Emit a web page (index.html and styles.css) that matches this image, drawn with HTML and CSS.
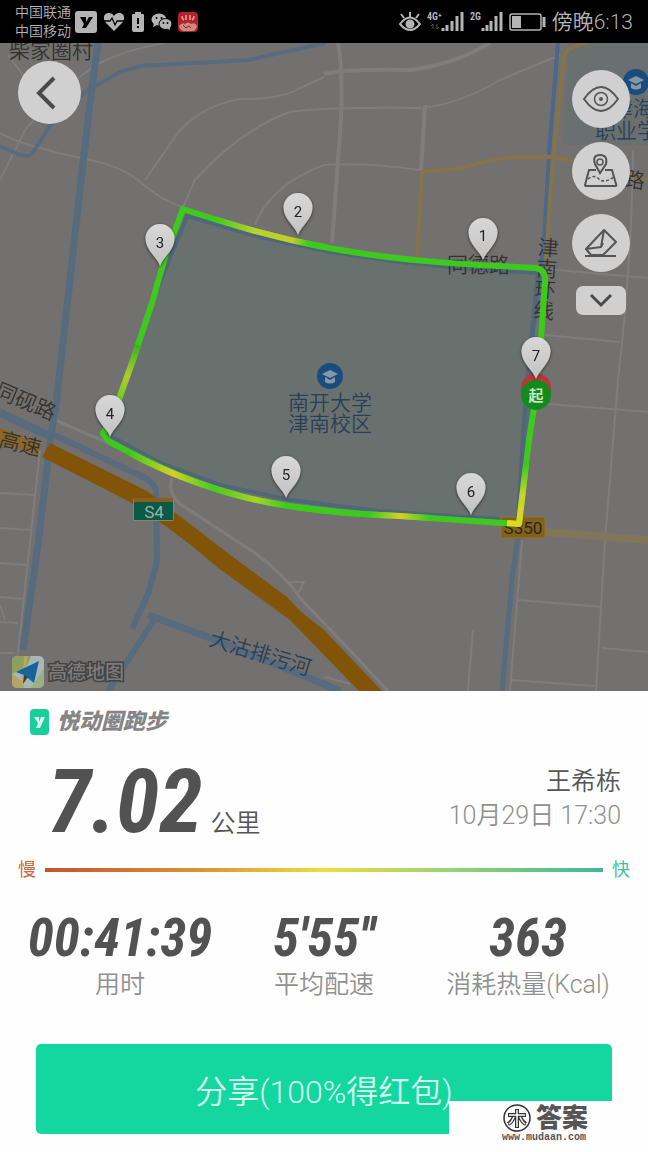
FILE: index.html
```html
<!DOCTYPE html>
<html lang="zh-CN">
<head>
<meta charset="utf-8">
<meta name="viewport" content="width=device-width, initial-scale=1">
<title>悦动圈跑步</title>
<link rel="stylesheet" href="styles.css">
</head>
<body>
<header class="status">
  <div class="carriers"><span>中国联通</span><span>中国移动</span></div>
  <div class="status-icons">
    <svg width="22" height="22" viewBox="0 0 22 22"><rect width="22" height="22" rx="3" fill="#b4b4b4"/><path d="M5 6H11V11L14 6H18L11 17H7L9 13z" fill="#000"/></svg>
    <svg width="22" height="20" viewBox="0 0 22 20"><path d="M11 19L3 11C-1 6 1 1 6 1c2 0 4 1 5 3 1-2 3-3 5-3 5 0 7 5 3 10z" fill="#b4b4b4"/><path d="M1 9h6l2-3 3 7 2-4h7" fill="none" stroke="#000" stroke-width="1.3"/></svg>
    <svg width="14" height="20" viewBox="0 0 14 20"><path d="M4 0h6v2h2q1 0 1 1v15q0 2-2 2H3q-2 0-2-2V3q0-1 1-1h2z" fill="#b4b4b4"/><path d="M7 6v6M7 14v2" stroke="#000" stroke-width="2"/></svg>
    <svg width="21" height="18" viewBox="0 0 21 18"><ellipse cx="8" cy="6.500" rx="7.500" ry="6" fill="#b4b4b4"/><path d="M3 10l-1 4 4-2z" fill="#b4b4b4"/><ellipse cx="14.500" cy="11" rx="6.500" ry="5.500" fill="#b4b4b4" stroke="#000"/><path d="M16 15l3 2v-4z" fill="#b4b4b4"/><g fill="#000"><circle cx="5.500" cy="5" r="1"/><circle cx="10.500" cy="5" r="1"/><circle cx="12.500" cy="10" r=".9"/><circle cx="16.500" cy="10" r=".9"/></g></svg>
    <svg width="20" height="20" viewBox="0 0 20 20"><rect width="20" height="20" rx="4" fill="#b71f2a"/><path d="M4 4q0 3 2 4M8 3v5M12 3v5M16 4q0 3-2 4" stroke="#e3a59a" stroke-width="1.500" fill="none"/><path d="M1 14q3-4 6-2 3-3 6 0 4-2 6 2-1 5-5 5H6q-4 0-5-5z" fill="#c98b82"/><path d="M5 13l3 3 3-2 2 2" stroke="#7d2a22" fill="none"/></svg>
  </div>
  <div class="status-right">
    <svg width="22" height="20" viewBox="0 0 22 20" fill="none" stroke="#b4b4b4" stroke-width="2"><path d="M1 12q10-13 20 0-10 12-20 0z"/><circle cx="11" cy="12" r="3.500" fill="#b4b4b4"/><path d="M11 5V0M5 6L2 2M17 6l3-4"/></svg>
    <svg width="37" height="21" viewBox="0 0 37 21"><text class="net" x="0" y="9">4G⁺</text><path d="M6 13v5M4 15l2-2M10 13v5l2-2" stroke="#555" fill="none"/><path d="M16 20v-3M20 20v-6M25 20V10M30 20V5M35 20V1" stroke="#b4b4b4" stroke-width="3"/></svg>
    <svg width="33" height="21" viewBox="0 0 33 21"><text class="net" x="0" y="9">2G</text><path d="M13 20v-3M17 20v-6M21 20V10M26 20V5M31 20V1" stroke="#b4b4b4" stroke-width="3"/></svg>
    <svg width="37" height="18" viewBox="0 0 37 18"><rect x="1" y="1" width="31" height="16" rx="2" fill="none" stroke="#b4b4b4" stroke-width="1.500"/><rect x="3" y="3" width="9" height="12" fill="#b4b4b4"/><path d="M35 4v10" stroke="#b4b4b4" stroke-width="3"/></svg>
    <time class="clock">傍晚6:13</time>
  </div>
</header>

<main>
<section class="map" aria-label="跑步路线">
<svg class="map-canvas" viewBox="0 43 648 648">
  <defs>
    <linearGradient id="pinFill" x1="0" y1="0" x2="0" y2="1"><stop offset="0" stop-color="#d8d8d8"/><stop offset="1" stop-color="#c2c2c2"/></linearGradient>
    <linearGradient id="topPace" gradientUnits="userSpaceOnUse" x1="215" y1="0" x2="325" y2="0"><stop offset="0" stop-color="#3dca1d"/><stop offset=".35" stop-color="#bad02f"/><stop offset=".7" stop-color="#c9ca2e"/><stop offset=".85" stop-color="#3dca1d"/></linearGradient>
    <linearGradient id="leftPace" gradientUnits="userSpaceOnUse" x1="0" y1="345" x2="0" y2="408"><stop offset="0" stop-color="#36b41f"/><stop offset=".5" stop-color="#b6c82e"/><stop offset="1" stop-color="#4fd01e"/></linearGradient>
    <linearGradient id="bottomPace" gradientUnits="userSpaceOnUse" x1="130" y1="0" x2="430" y2="0"><stop offset="0" stop-color="#3dca1d"/><stop offset=".14" stop-color="#d6cf27"/><stop offset=".28" stop-color="#48ca1f"/><stop offset=".42" stop-color="#a9d22a"/><stop offset=".52" stop-color="#3dca1d"/><stop offset=".8" stop-color="#3dca1d"/><stop offset=".9" stop-color="#d6cf27"/><stop offset="1" stop-color="#3dca1d"/></linearGradient>
    <linearGradient id="rightPace" gradientUnits="userSpaceOnUse" x1="0" y1="465" x2="0" y2="524"><stop offset="0" stop-color="#3dca1d"/><stop offset=".5" stop-color="#c6d428"/><stop offset="1" stop-color="#e0d820"/></linearGradient>
    <filter id="pinShadow" x="-50%" y="-50%" width="200%" height="200%"><feDropShadow dx="0" dy="1" stdDeviation="1.500" flood-color="#000" flood-opacity=".65"/></filter>
    <path id="pin" d="M0 0C-3-9-14.500-16-14.500-27.500a14.500 14.500 0 0 1 29 0C14.500-16 3-9 0 0z"/>
    <g id="school"><circle r="13" fill="#1b4c80"/><path d="M-8-2L0-6 8-2 0 2zM-5 1v5q5 3 10 0V1L0 4z" fill="#8798a5"/></g>
  </defs>

  <rect y="43" width="648" height="648" fill="#72716f"/>
  <path d="M568 43H648V145H563z" fill="#69706f"/>

  <g fill="none" stroke="#7f7e7d" stroke-width="2">
    <path d="M8 55L23 75M0 133Q20 145 90 160Q125 167 145 186Q165 202 183 207L195 180Q240 130 290 112Q325 107 420 108Q455 106 500 80L560 55"/>
    <path d="M0 180L25 130Q70 80 100 63Q125 50 165 43M145 180L180 130Q205 105 240 99Q280 100 300 88L324 77M255 225Q270 185 324 165Q365 162 420 170M633 150Q632 260 618 380L605 540 596 691"/>
    <path stroke-width="4" d="M324 74Q345 69 410 70Q455 64 490 43M338 43Q343 70 341 120L332 243M425 105L421 170"/>
    <path d="M545 269L648 278M545 335L620 342M548 404L648 412M518 600L602 607M602 648L648 652M512 680L594 686M473 630L468 691M522 540L510 691"/>
    <path d="M40 450L15 680M0 493L35 495M0 528L31 530M0 563L26 565M0 597L23 599M0 622L18 623M0 653L15 653M0 605L5 620"/>
    <path stroke-width="3" d="M55 420L120 448L145 463M172 478Q167 492 180 504L255 553Q285 575 300 598L345 645L388 691"/>
    <path d="M286 582L304 582 298 593M325 677L350 684"/>
  </g>

  <g fill="none" stroke="#566b7e" stroke-linejoin="round">
    <path stroke-width="7" d="M98 43L90 103 80 190 56 405 51 435 38 545 23 650"/>
    <path stroke-width="4" d="M325 43L248 60 140 66 120 72 85 92 50 126 34 151Q30 158 20 155L0 146"/>
    <path stroke-width="8" d="M0 413L50 436"/>
    <path stroke-width="6" d="M50 433L145 478Q156 484 156 492L157 562 148 594 132 629M108 691L154 620"/>
    <path stroke-width="7" d="M148 615L205 636 324 684 340 691"/>
    <path stroke-width="5" d="M532 330L528 420 519 530 512 580 502 691"/>
    <path stroke="#4d678a" stroke-width="4" d="M558 43L550 140 544 240 532 340"/>
  </g>
  <path d="M187 216L260 237 330 252 400 262 470 269 538 273 530 350 524 420 518 520 450 516 380 511 290 500 220 485 160 463 107 434 124 387 153 300z" fill="#69716f" stroke="#50667a" stroke-width="4"/>

  <g fill="none" stroke="#84734b" stroke-width="4">
    <path d="M417 255L422 172 462 168Q500 157 520 157H550L590 163 648 180M590 43Q567 45 564 57L552 170 546 260"/>
    <path stroke="#827659" stroke-width="8" d="M545 532L648 540"/>
  </g>
  <path d="M0 428L42 444 37 455 0 444z" fill="#8c6725"/>
  <path d="M50 443L147 491 177 514 233 557 287 597 300 611 324 630 382 691H359L324 655 290 620 217 567 192 546 167 527 130 502 42 457z" fill="#825407"/>

  <g class="label">
    <text x="9" y="58">柴家圈村</text>
    <text x="447" y="272">同德路</text>
    <text class="vertical" transform="translate(547 237) rotate(4)">津南环线</text>
    <text transform="translate(-6 396) rotate(23)">同砚路</text>
    <text transform="translate(-2 446) rotate(14)">高速</text>
    <text transform="translate(623 186) rotate(8)">路</text>
  </g>
  <g class="label label-blue">
    <text x="612" y="116">津海</text>
    <text x="595" y="138">职业学院</text>
    <text x="288" y="410">南开大学</text>
    <text x="288" y="431">津南校区</text>
    <text transform="translate(208 645) rotate(17)">大沽排污河</text>
  </g>
  <use href="#school" x="330" y="376"/>
  <use href="#school" x="636" y="82"/>

  <rect x="133" y="498" width="41" height="23" rx="2" fill="#8b836b"/>
  <rect x="134" y="499" width="39" height="21" fill="#0b5a47"/><rect x="134" y="498" width="39" height="4" fill="#8b5d1b"/>
  <text class="shield" x="154" y="518" fill="#a1aea8">S4</text>
  <rect x="501" y="517" width="44" height="21" fill="#80611d" stroke="#96752b"/>
  <text class="shield" x="523" y="534" fill="#302611">S350</text>

  <g fill="none" stroke="#3dca1d" stroke-width="6" stroke-linejoin="round">
    <path d="M536 395L541 340 545 282Q546 270 536 268L480 265Q390 260 324 247T183 209L166 254 152 303 133 360 119 398 103 434 110 442Q180 480 240 496T400 516L519 524 529 440 536 395"/>
    <path stroke="url(#topPace)" d="M215 219Q270 237 325 247"/>
    <path stroke="url(#leftPace)" d="M138 345L133 360 116 408"/>
    <path stroke="url(#bottomPace)" d="M130 453Q180 480 240 496T400 516L430 518"/>
    <path stroke="url(#rightPace)" d="M507 523L519 524 526 465"/>
  </g>
  <circle cx="536" cy="388" r="15" fill="#b7383b"/>
  <circle cx="536" cy="395" r="15" fill="#138b1c"/>
  <text class="start" x="536" y="401">起</text>

  <g filter="url(#pinShadow)" fill="url(#pinFill)">
    <use href="#pin" x="483" y="260"/><use href="#pin" x="298" y="235"/><use href="#pin" x="160" y="266"/><use href="#pin" x="110" y="437"/><use href="#pin" x="286" y="498"/><use href="#pin" x="471" y="515"/><use href="#pin" x="536" y="379"/>
  </g>
  <g class="pin-no">
    <text x="483" y="241">1</text><text x="298" y="217">2</text><text x="160" y="248">3</text><text x="110" y="419">4</text><text x="286" y="480">5</text><text x="471" y="497">6</text><text x="536" y="361">7</text>
  </g>

  <clipPath id="tile"><rect x="12" y="656" width="32" height="32" rx="5"/></clipPath>
  <g clip-path="url(#tile)">
    <path d="M12 656H44V688H12z" fill="#a9b8b4"/><path d="M12 656H31L26 668 12 674z" fill="#8f9f60"/><path d="M12 688V674L22 681 21 688z" fill="#b2a565"/><path d="M31 688L44 668V688z" fill="#9bb081"/><path d="M26 656L22 688" stroke="#b9a95d" stroke-width="3"/>
    <path d="M39 661L16 672 24 675 34 683z" fill="#17639b"/><path d="M24 675L23 684 28 677z" fill="#33434e"/>
  </g>
  <text class="provider" x="48" y="679">高德地图</text>
</svg>

<button class="round back" aria-label="返回"><svg viewBox="0 0 63 63"><path d="M36 17L21 32 36 47" fill="none" stroke="#4a4a4a" stroke-width="4"/></svg></button>
<div class="tools">
  <button class="round" aria-label="显示"><svg viewBox="0 0 58 58" fill="none" stroke="#555" stroke-width="2"><path d="M12 29Q29 5 46 29Q29 53 12 29z"/><circle cx="29" cy="29" r="6.500" stroke-width="1.500"/><circle cx="29" cy="29" r="2" fill="#555" stroke="none"/></svg></button>
  <button class="round" aria-label="地图"><svg viewBox="0 0 58 58" fill="none" stroke="#555" stroke-width="2"><path d="M24 28H17L13 43Q13 44 15 44H43Q45 44 44 42L40 28H33"/><path d="M28 31L23 22Q20 13 28 13T34 22z"/><circle cx="28" cy="20" r="3" stroke-width="1.500"/><path d="M16 37Q22 32 27 37T42 35" stroke-width="1.500" stroke-dasharray="3 2"/></svg></button>
  <button class="round" aria-label="擦除"><svg viewBox="0 0 58 58" fill="none" stroke="#555" stroke-width="2" stroke-linejoin="round"><path d="M14 35L32 16 44 28 31 41H19zM14 35L29 33 32 16M29 33L31 29M13 42H44"/></svg></button>
  <button class="fold" aria-label="展开"><svg viewBox="0 0 50 29"><path d="M15 9L25 19 35 9" fill="none" stroke="#4a4a4a" stroke-width="3"/></svg></button>
</div>
</section>

<section class="panel">
  <div class="brand">
    <svg width="19" height="26" viewBox="0 0 19 26"><rect width="19" height="26" rx="4" fill="#19ce9b"/><path d="M4 8H9V13L11 8H15L10 19H6L8 14z" fill="#d9f8ec"/></svg>
    <h1>悦动圈跑步</h1>
  </div>
  <div class="summary">
    <p class="distance"><strong>7.02</strong><span>公里</span></p>
    <div class="runner"><p class="name">王希栋</p><time class="date">10月29日 17:30</time></div>
  </div>
  <div class="pace"><span class="slow">慢</span><div class="bar"></div><span class="fast">快</span></div>
  <dl class="stats">
    <div><dd>00:41:39</dd><dt>用时</dt></div>
    <div><dd>5'55''</dd><dt>平均配速</dt></div>
    <div><dd>363</dd><dt>消耗热量(Kcal)</dt></div>
  </dl>
  <button class="share">分享(100%得红包)</button>
</section>
</main>

<footer class="mark">
  <div class="mark-top">
    <svg width="30" height="28" viewBox="0 0 30 28" fill="none" stroke="#333"><circle cx="15" cy="14" r="13" stroke-width="1.500"/><path d="M6 11H24M15 5V24M12 13Q10 18 6 20M18 13Q20 18 24 20" stroke-width="4"/><path d="M7 11H23M15 6V23M12 13Q10 18 7 20M18 13Q20 18 23 20" stroke="#fff" stroke-width="1.500"/></svg>
    <span>答案</span>
  </div>
  <small>www.mudaan.com</small>
</footer>
</body>
</html>
```

FILE: styles.css
```css
* { box-sizing: border-box; }

body {
  margin: 0;
  position: relative;
  background: #fefefe;
  color: #555;
  font-family: Roboto, "Noto Sans CJK SC", sans-serif;
}

p, h1, dl, dd, dt { margin: 0; }

button {
  border: 0;
  padding: 0;
  font: inherit;
  cursor: pointer;
}

.status {
  display: flex;
  align-items: center;
  min-height: 43px;
  padding: 0 15px;
  background: #000;
  color: #b4b4b4;
}

.carriers {
  display: flex;
  flex-direction: column;
  font-size: 14px;
  line-height: 19px;
  font-weight: 350;
}

.status-icons {
  display: flex;
  align-items: center;
  gap: 6px;
  margin-left: 4px;
}

.status-right {
  display: flex;
  align-items: center;
  gap: 6px;
  margin-left: auto;
}

.net {
  font: 700 10px "Roboto Condensed", "Liberation Sans Narrow", Roboto, sans-serif;
  fill: #b4b4b4;
}

.clock {
  font-size: 21px;
  font-weight: 350;
  line-height: 28px;
}

.map { position: relative; }

.map-canvas {
  display: block;
  width: 100%;
  height: auto;
}

.label {
  font-size: 21px;
  font-weight: 350;
  fill: #333332;
}

.label-blue { fill: #293f56; }

.vertical { writing-mode: vertical-rl; }

.shield {
  font-size: 17px;
  text-anchor: middle;
}

.start {
  font-size: 15px;
  font-weight: 700;
  text-anchor: middle;
  fill: #c7e2c6;
}

.pin-no {
  font-size: 15px;
  text-anchor: middle;
  fill: #222;
}

.provider {
  font-size: 19px;
  font-weight: 500;
  fill: #7c7c7c;
  stroke: #434343;
  stroke-width: 3px;
  paint-order: stroke;
}

.round {
  width: 58px;
  height: 58px;
  border-radius: 50%;
  background: #d0d0d0;
}

.round svg,
.fold svg { display: block; width: 100%; }

.back {
  position: absolute;
  top: 18px;
  left: 18px;
  width: 63px;
  height: 63px;
}

.tools {
  position: absolute;
  top: 27px;
  right: 18px;
  display: flex;
  flex-direction: column;
  align-items: center;
  gap: 14px;
}

.fold {
  width: 50px;
  height: 29px;
  border-radius: 7px;
  background: #d0d0d0;
}

.panel { padding: 16px 18px 18px; }

.brand {
  display: flex;
  align-items: center;
  gap: 8px;
  padding-left: 12px;
}

.brand h1 {
  font-size: 22px;
  line-height: 30px;
  font-weight: 900;
  font-style: italic;
  color: #858585;
}

.summary {
  display: flex;
  justify-content: space-between;
  align-items: flex-start;
  padding: 20px 9px 0 30px;
}

.distance {
  display: flex;
  align-items: baseline;
  gap: 8px;
}

.distance strong,
.stats dd {
  font-family: "Roboto Condensed", "Liberation Sans Narrow", Roboto, sans-serif;
  font-weight: 700;
  font-style: italic;
  color: #525252;
}

.distance strong {
  font-size: 88px;
  line-height: 90px;
}

.distance span {
  font-size: 25px;
  font-weight: 350;
}

.runner {
  display: flex;
  flex-direction: column;
  align-items: flex-end;
  padding-top: 8px;
  font-size: 25px;
  line-height: 34px;
  font-weight: 350;
}

.date {
  color: #909090;
}

.pace {
  display: flex;
  align-items: center;
  gap: 9px;
  padding-top: 10px;
  font-size: 18px;
  line-height: 26px;
}

.bar {
  flex: 1;
  height: 4px;
  background: linear-gradient(90deg, #c5532f, #dc9a34 30%, #eede3c 50%, #9bd273 72%, #3fb896);
}

.slow { color: #cc6840; }

.fast { color: #45bfa0; }

.stats {
  display: grid;
  grid-template-columns: repeat(3, 1fr);
  padding-top: 25px;
  text-align: center;
}

.stats div {
  display: flex;
  flex-direction: column;
  white-space: nowrap;
}

.stats dd {
  font-size: 53px;
  line-height: 60px;
}

.stats dt {
  font-size: 25px;
  line-height: 34px;
  font-weight: 350;
  color: #909090;
}

.share {
  display: block;
  width: calc(100% - 36px);
  height: 90px;
  margin: 42px 18px 0;
  border-radius: 5px;
  background: #14d69f;
  color: #d5fbef;
  font-size: 32px;
  font-weight: 350;
}

.mark {
  position: absolute;
  right: 0;
  bottom: 0;
  width: 199px;
  height: 51px;
  padding: 2px 59px 0 53px;
  background: #fefefe;
  color: #555;
}

.mark-top {
  display: flex;
  align-items: center;
  gap: 4px;
  height: 29px;
}

.mark-top span {
  font-size: 26px;
  line-height: 28px;
  font-weight: 900;
}

.mark small {
  display: block;
  font: 700 10px/12px "Liberation Mono", monospace;
}
```
